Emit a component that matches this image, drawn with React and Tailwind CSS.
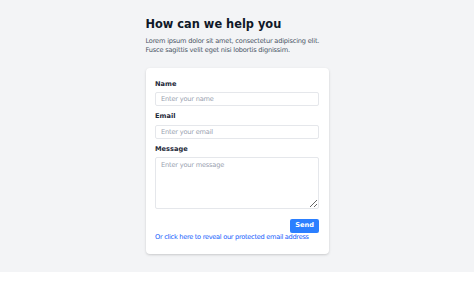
import React from 'react';

const App = () => {
    return (
        <div className="bg-gray-100 pt-[16.5px] pb-[18px] font-['DejaVu_Sans',sans-serif]">
            <div className="w-[183px] mx-auto">
                {/* Header */}
                <h1 className="text-[11.4px] leading-[15.2px] font-bold text-gray-900">How can we help you</h1>
                <p className="mt-[5px] text-[6.64px] leading-[9.5px] tracking-[-0.2px] text-gray-600">
                    Lorem ipsum dolor sit amet, consectetur adipiscing elit. Fusce sagittis velit eget nisi lobortis dignissim.
                </p>

                {/* Contact Form */}
                <form className="mt-[12.5px] bg-white rounded-[4px] shadow-[0_1px_3px_rgba(0,0,0,0.12),0_1px_2px_rgba(0,0,0,0.06)] px-[9.5px] pt-[11.5px] pb-[11.5px]">
                    <div className="mb-[6px]">
                        <label className="block mb-[3px] text-[6.64px] leading-[9.5px] font-bold text-gray-800">Name</label>
                        <input
                            type="text"
                            placeholder="Enter your name"
                            className="block w-full h-[14px] px-[5px] text-[6.64px] tracking-[-0.2px] border border-gray-200 rounded-[2px] placeholder:text-gray-400 outline-none"
                        />
                    </div>
                    <div className="mb-[6px]">
                        <label className="block mb-[3px] text-[6.64px] leading-[9.5px] font-bold text-gray-800">Email</label>
                        <input
                            type="email"
                            placeholder="Enter your email"
                            className="block w-full h-[14px] px-[5px] text-[6.64px] tracking-[-0.2px] border border-gray-200 rounded-[2px] placeholder:text-gray-400 outline-none"
                        />
                    </div>
                    <div className="mb-[9.4px]">
                        <label className="block mb-[3px] text-[6.64px] leading-[9.5px] font-bold text-gray-800">Message</label>
                        <textarea
                            placeholder="Enter your message"
                            className="block w-full h-[52px] px-[5px] py-[2.5px] text-[6.64px] leading-[9.5px] tracking-[-0.2px] border border-gray-200 rounded-[2px] placeholder:text-gray-400 outline-none"
                        />
                    </div>
                    <div className="flex justify-end">
                        <button
                            type="button"
                            className="h-[14.6px] px-[5px] bg-blue-500 text-white text-[6.64px] font-bold rounded-[2px]"
                        >
                            Send
                        </button>
                    </div>
                    <a href="#" className="block text-[6.64px] leading-[9.5px] tracking-[-0.3px] text-blue-600">
                        Or click here to reveal our protected email address
                    </a>
                </form>
            </div>
        </div>
    );
};

export default App;
